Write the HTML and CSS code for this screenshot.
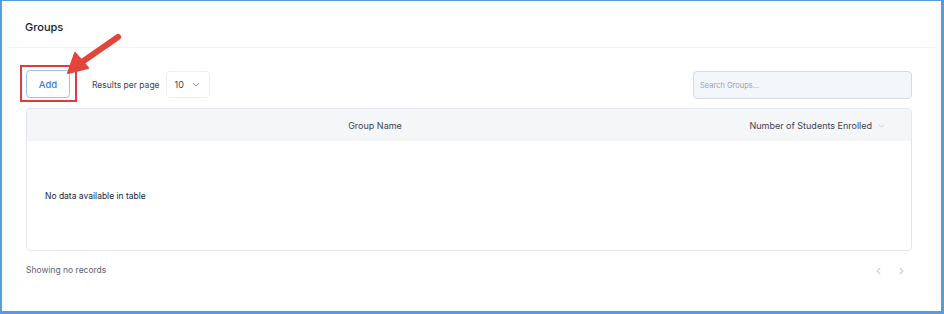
FILE: index.html
```html
<!DOCTYPE html>
<html>
	<head>
		<meta charset="utf-8">
		<title>Groups</title>
		<link rel="stylesheet" href="styles.css">
	</head>
	<body>
	<div class="frame">
		<div class="card">
			<div class="card-header">
				<h2>Groups</h2>
			</div>
			<div class="card-body">
				<div class="toolbar">
					<div class="toolbar-left">
						<div class="highlight">
							<button class="btn-add">Add</button>
						</div>
						<label class="per-page">Results per page</label>
						<div class="select">
							<span>10</span>
							<svg width="8" height="5" viewBox="0 0 8 5"><path d="M1 1l3 3 3-3" fill="none" stroke="#8a8fa3" stroke-width="1"/></svg>
						</div>
					</div>
					<div class="search">Search Groups...</div>
				</div>

				<div class="table">
					<div class="thead">
						<div class="th col-name">Group Name</div>
						<div class="th col-count">Number of Students Enrolled
							<svg width="7" height="4" viewBox="0 0 7 4"><path d="M1 1l2.5 2 2.5-2" fill="none" stroke="#c2c6d2" stroke-width="0.8"/></svg>
						</div>
					</div>
					<div class="tbody">
						<span>No data available in table</span>
					</div>
				</div>

				<div class="table-footer">
					<span>Showing no records</span>
					<div class="pager">
						<span>&lsaquo;</span>
						<span>&rsaquo;</span>
					</div>
				</div>
			</div>
		</div>

		<!-- annotation arrow -->
		<svg class="arrow" width="70" height="50" viewBox="0 0 70 50">
			<line x1="64" y1="5" x2="28" y2="30" stroke="#e2453c" stroke-width="6" stroke-linecap="round"/>
			<polygon points="14,41 21,21 34,36" fill="#e2453c" stroke="#e2453c" stroke-width="2" stroke-linejoin="round"/>
		</svg>
	</div>
	</body>
</html>
```

FILE: styles.css
```css
* {
	margin: 0;
	padding: 0;
	box-sizing: border-box;
}
body {
	font-family: "Inter", "Noto Sans", sans-serif;
	color: #3f4254;
	background: #fff;
}
.frame {
	width: 944px;
	height: 314px;
	border: 2px solid #5b9bd8;
	border-top-width: 1px;
	border-right-width: 3px;
	border-bottom-width: 3px;
	position: relative;
	background: #fbfbfc;
}
.card {
	background: #fff;
	width: 928px;
	height: 308px;
	margin-left: 6px;
}
.card-header {
	height: 47px;
	border-bottom: 1px solid #f1f2f5;
	padding: 19px 0 0 17px;
}
.card-header h2 {
	font-size: 11px;
	font-weight: 500;
	color: #181c32;
}
.card-body {
	padding: 16px 24px 0 18px;
}
.toolbar {
	display: flex;
	justify-content: space-between;
	align-items: flex-start;
	height: 44px;
}
.toolbar-left {
	display: flex;
	align-items: center;
}
.highlight {
	border: 2px solid #e23a3a;
	padding: 3px 5px 2px 4px;
	margin-top: 1px;
	margin-left: -6px;
}
.btn-add {
	width: 44px;
	height: 28px;
	border: 1px solid #9dc2ef;
	border-radius: 4px;
	background: #fff;
	color: #3a7ed8;
	font-family: inherit;
	font-size: 9.5px;
	font-weight: 500;
}
.per-page {
	font-size: 8.5px;
	margin-left: 15px;
	margin-right: 6px;
	margin-top: 3px;
}
.select {
	width: 44px;
	height: 27px;
	border: 1px solid #eef0f4;
	border-radius: 4px;
	display: flex;
	align-items: center;
	justify-content: space-between;
	padding: 0 9px 0 8px;
	font-size: 9px;
	margin-top: 3px;
}
.search {
	width: 219px;
	height: 28px;
	margin-top: 7px;
	background: #f3f6fb;
	border: 1px solid #d5dae3;
	border-radius: 4px;
	font-size: 7.5px;
	color: #9aa0b2;
	padding: 9px 0 0 6px;
}
.table {
	border: 1px solid #e4e6ef;
	border-radius: 4px;
	height: 143px;
	overflow: hidden;
}
.thead {
	display: flex;
	background: #f5f6f8;
	height: 32px;
	align-items: center;
	font-size: 9px;
}
.th {
	text-align: center;
}
.col-name {
	width: 696px;
}
.col-count {
	flex: 1;
}
.col-count svg {
	margin-left: 3px;
	vertical-align: middle;
}
.tbody {
	height: 109px;
	display: flex;
	align-items: center;
	padding-left: 18px;
	font-size: 8.5px;
	color: #181c32;
}
.table-footer {
	display: flex;
	justify-content: space-between;
	align-items: center;
	height: 38px;
	font-size: 8.5px;
	color: #5e6278;
}
.pager {
	display: flex;
	gap: 18px;
	color: #c4c7d2;
	font-size: 13px;
	padding-right: 8px;
}
.arrow {
	position: absolute;
	left: 52px;
	top: 31px;
}
```
